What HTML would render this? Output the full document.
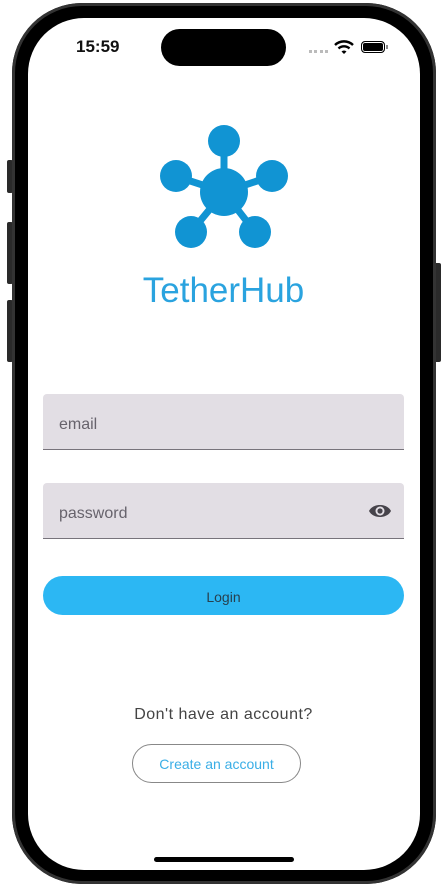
<!DOCTYPE html>
<html><head><meta charset="utf-8"><style>
html,body{margin:0;padding:0;background:#fff;width:447px;height:888px;overflow:hidden;font-family:"Liberation Sans",sans-serif}
.abs{position:absolute}
.btn{background:#2a2a2a;border-radius:2px}
</style></head><body>
<div class="abs btn" style="left:7px;top:160px;width:6px;height:33px"></div>
<div class="abs btn" style="left:7px;top:222px;width:6px;height:62px"></div>
<div class="abs btn" style="left:7px;top:300px;width:6px;height:62px"></div>
<div class="abs btn" style="left:434px;top:263px;width:7px;height:99px"></div>
<div class="abs" style="left:12px;top:3px;width:424px;height:881px;border-radius:70px;background:#000;box-shadow:inset 0 0 0 3px #333"></div>
<div class="abs" style="left:28px;top:18px;width:392px;height:852px;border-radius:56px;background:#fff;overflow:hidden">
</div>
<div class="abs" style="left:161px;top:29px;width:125px;height:37px;border-radius:19px;background:#000"></div>
<div class="abs" style="left:76px;top:37px;font-size:17px;font-weight:bold;color:#111">15:59</div>
<div class="abs" style="left:309px;top:50px;width:19px;height:3px;border-top:3px dotted #bbb"></div>
<svg class="abs" style="left:334px;top:40px" width="20" height="15" viewBox="0 0 20 15"><path d="M1 5 A13 13 0 0 1 19 5" stroke="#000" stroke-width="2.4" fill="none"/><path d="M4.5 8.5 A8 8 0 0 1 15.5 8.5" stroke="#000" stroke-width="2.4" fill="none"/><path d="M7.5 11.5 L10 14 L12.5 11.5 A4 4 0 0 0 7.5 11.5Z" fill="#000"/></svg>
<div class="abs" style="left:361px;top:41px;width:22px;height:10px;border:1.5px solid #000;border-radius:4px;background:#000;box-shadow:inset 0 0 0 1px #fff"></div>
<div class="abs" style="left:386px;top:45px;width:1.5px;height:4px;background:#888"></div>
<svg class="abs" style="left:150px;top:120px" width="150" height="140" viewBox="150 120 150 140">
<g stroke="#1194d3" stroke-width="7"><line x1="224" y1="192" x2="224" y2="140"/><line x1="224" y1="192" x2="175" y2="176"/><line x1="224" y1="192" x2="272" y2="176"/><line x1="224" y1="192" x2="191" y2="232"/><line x1="224" y1="192" x2="255" y2="232"/></g>
<g fill="#1194d3"><circle cx="224" cy="192" r="24"/><circle cx="224" cy="141" r="16"/><circle cx="176" cy="176" r="16"/><circle cx="272" cy="176" r="16"/><circle cx="191" cy="232" r="16"/><circle cx="255" cy="232" r="16"/></g></svg>
<div class="abs" style="left:0;width:447px;top:271px;text-align:center;font-size:35px;color:#2aa3df;font-weight:300">TetherHub</div>
<div class="abs" style="left:43px;top:394px;width:361px;height:55px;background:#e2dee4;border-radius:4px 4px 0 0;border-bottom:1.5px solid #77737b"></div>
<div class="abs" style="left:59px;top:416px;font-size:16px;color:#67636c">email</div>
<div class="abs" style="left:43px;top:483px;width:361px;height:55px;background:#e2dee4;border-radius:4px 4px 0 0;border-bottom:1.5px solid #77737b"></div>
<div class="abs" style="left:59px;top:505px;font-size:16px;color:#67636c">password</div>
<svg class="abs" style="left:368px;top:501px" width="24" height="20" viewBox="0 0 24 20"><path d="M1 10 C5 2 19 2 23 10 C19 18 5 18 1 10Z" fill="#46434a"/><circle cx="12" cy="10" r="4.5" fill="#e2dee4"/><circle cx="12" cy="10" r="2.6" fill="#46434a"/></svg>
<div class="abs" style="left:43px;top:576px;width:361px;height:39px;background:#2cb7f3;border-radius:20px;text-align:center;line-height:42px;font-size:14px;color:#27404e">Login</div>
<div class="abs" style="left:0;width:447px;top:706px;text-align:center;font-size:16px;color:#444;letter-spacing:0.5px">Don't have an account?</div>
<div class="abs" style="left:132px;top:744px;width:167px;height:37px;border:1px solid #888;border-radius:20px;text-align:center;line-height:39px;font-size:14px;color:#3aaee6">Create an account</div>
<div class="abs" style="left:154px;top:857px;width:140px;height:5px;border-radius:3px;background:#000"></div>
</body></html>
